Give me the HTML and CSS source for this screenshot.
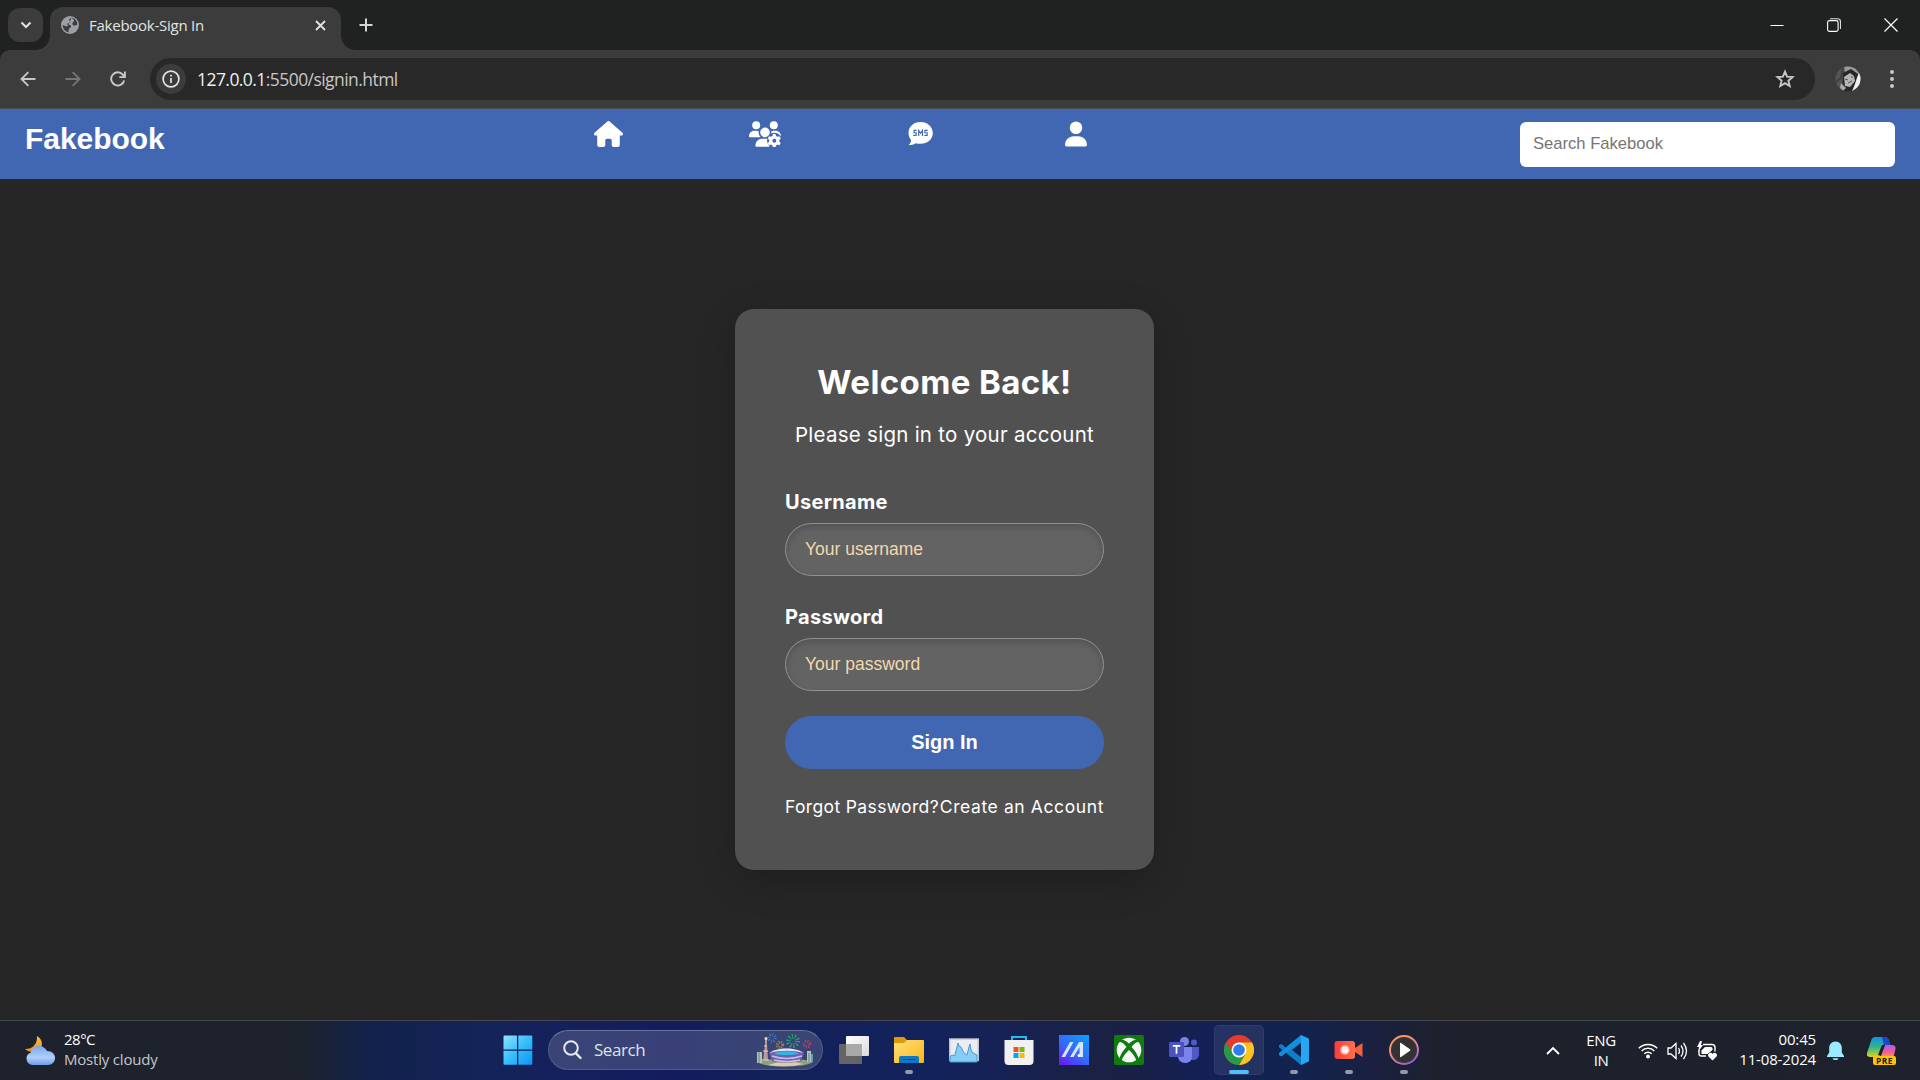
FILE: index.html
```html
<!DOCTYPE html>
<html lang="en">
<head>
<meta charset="utf-8">
<title>Fakebook-Sign In</title>
<link rel="stylesheet" href="styles.css">
</head>
<body>
<div class="desktop">
  <div class="tabstrip">
    <button class="tab-search"><svg width="12" height="8" viewBox="0 0 12 8"><path d="M1.5 1.5 6 6l4.500-4.500" fill="none" stroke="#e3e3e3" stroke-width="2"/></svg></button>
    <div class="tab">
      <svg width="18" height="18" viewBox="0 0 18 18"><circle cx="9" cy="9" r="9" fill="#9aa0a6"/><path d="M10.500 1.600C9 3 7.800 3.200 8.200 4.800c1.500.4 1.300 1.600.2 2.100-1 .5-2.600.3-3 1.700 2.400-.3 4.600.2 4.700 2 0 1.500-2 1.200-2.300 2.700l-.4 2.900C3.800 15.600 1.700 12.400 1.700 9l3.800 1.500L7 9.800M10.500 1.600c4 1 6 4.200 5.800 7.200-1.300-.2-1.700 1-3 .8-1.800-.3-2.200-1.700-1.800-2.700.3-1 1.800-1 1.700-2.300-.2-1-1.400-1.300-2.700-3z" fill="#3c3c3c"/></svg>
      <span class="tab-title">Fakebook-Sign In</span>
      <svg width="11" height="11" viewBox="0 0 11 11"><path d="M1 1l9 9M10 1l-9 9" stroke="#e3e3e3" stroke-width="1.800"/></svg>
    </div>
    <svg class="new-tab" width="14" height="14" viewBox="0 0 14 14"><path d="M7 .5v13M.5 7h13" stroke="#d4d4d4" stroke-width="2"/></svg>
    <div class="window-buttons">
      <svg width="14" height="14" viewBox="0 0 14 14"><path d="M.5 7.500h13" stroke="#fff"/></svg>
      <svg width="14" height="14" viewBox="0 0 14 14"><rect x=".6" y="2.600" width="10.500" height="10.800" rx="1.800" fill="none" stroke="#fff" stroke-width="1.100"/><path d="M3 .7h7.500a3 3 0 0 1 3 3V11" fill="none" stroke="#ddd" stroke-width="1.100"/></svg>
      <svg width="14" height="14" viewBox="0 0 14 14"><path d="M.5.500l13 13m0-13-13 13" stroke="#fff" stroke-width="1.200"/></svg>
    </div>
  </div>
  <div class="toolbar">
    <svg width="16" height="16" viewBox="0 0 16 16"><path d="M15.500 8H2M8.300 1.200 1.500 8l6.800 6.800" fill="none" stroke="#c7c7c7" stroke-width="1.900"/></svg>
    <svg width="16" height="16" viewBox="0 0 16 16"><path d="M.5 8H14M7.700 1.200 14.500 8l-6.800 6.800" fill="none" stroke="#757575" stroke-width="1.900"/></svg>
    <svg width="16" height="16" viewBox="0 0 16 16"><path d="M14.200 9.500a6.600 6.600 0 1 1-1.500-6l2 2.200M14.900.5v5.600H9.300" fill="none" stroke="#c7c7c7" stroke-width="1.900"/></svg>
    <div class="omnibox">
      <span class="site-info"><svg width="18" height="18" viewBox="0 0 18 18"><circle cx="9" cy="9" r="7.900" fill="none" stroke="#e3e3e3" stroke-width="1.700"/><path d="M9 8v5M9 4.800v1.800" stroke="#e3e3e3" stroke-width="1.700"/></svg></span>
      <span class="url"><b>127.0.0.1</b>:5500/signin.html</span>
      <svg width="20" height="20" viewBox="0 0 20 20"><path d="M10 2.600l2.100 5 5.500.5-4.200 3.600 1.300 5.400L10 14.200l-4.700 2.900 1.300-5.400-4.200-3.600 5.500-.5z" fill="none" stroke="#c7c7c7" stroke-width="1.900"/></svg>
    </div>
    <svg class="avatar" width="26" height="26" viewBox="0 0 26 26"><clipPath id="face"><circle cx="13" cy="13" r="12.500"/></clipPath><g clip-path="url(#face)"><path d="M0 0h26v26H0z" fill="#555"/><path d="M9 0h10l7 7v6L18 5l-8 1z" fill="#999"/><path d="M8 7l8-4 7 5-1 12-6 6H7z" fill="#272727"/><path d="M9 11l6-4 4 3 1 5-5 6-5-1z" fill="#b5b5b5"/><path d="M10 13l3 1m3-3 2 0m-5 6 4-2" stroke="#555"/><path d="M25 6c-4 5-3 9-8 19h4l7-9z" fill="#eee"/><path d="M6 17l5 5-3 3-3-3z" fill="#aaa"/><path d="M8 2 6 12 0 17" stroke="#404040" stroke-width="2" fill="none"/></g></svg>
    <svg width="6" height="20" viewBox="0 0 6 20" fill="#c7c7c7"><circle cx="3" cy="3" r="2"/><circle cx="3" cy="10" r="2"/><circle cx="3" cy="17" r="2"/></svg>
  </div>

  <header class="site-header">
    <div class="logo">Fakebook</div>
    <nav class="site-nav">
      <a><svg width="29" height="26" viewBox="0 0 576 512"><path fill="#fff" d="M575.800 255.500c0 18-15 32.100-32 32.100h-32l.7 160.200c0 2.700-.2 5.400-.5 8.100V472c0 22.100-17.900 40-40 40H392c-22.100 0-40-17.900-40-40v-88c0-17.700-14.300-32-32-32h-64c-17.700 0-32 14.300-32 32v88c0 22.100-17.900 40-40 40h-80c-22.100 0-40-17.900-40-40V287.600H32c-18 0-32-14-32-32.100 0-9 3-17 10-24L266.400 8c7-7 15-8 22-8s15 2 21 7l255.400 224.500c8 7 12 15 11 24z"/></svg></a>
      <a><svg width="32" height="26" viewBox="0 0 640 512"><g fill="#fff"><circle cx="144" cy="80" r="80"/><circle cx="496" cy="80" r="80"/><path d="M0 298.700C0 239.800 47.800 192 106.700 192h42.700c15.900 0 31 3.500 44.600 9.700-8.200 54 14 92 42 118.300H21.300C9.600 320 0 310.400 0 298.700zM404 320c50-34 44-88 42-118.300 13.600-6.200 28.700-9.700 44.600-9.700h42.700C592 192 640 240 640 298.700c0 12-10 21.300-21.300 21.300z"/></g><g fill="#fff"><path d="M128 485.300C128 411.700 187.700 352 261.300 352H405v160H154.700C140 512 128 500 128 485.300z"/><circle cx="320" cy="224" r="96"/></g><circle cx="509" cy="382" r="149" fill="#4267b2"/><path d="M480 256h50l10 39 29 17 39-11 27 44-29 29v32l29 29-27 44-39-11-29 17-10 38h-50l-10-38-29-17-38 11-27-44 28-29v-32l-28-29 27-44 38 11 29-17z" fill="#fff"/><circle cx="506" cy="390" r="39" fill="#4267b2"/></svg></a>
      <a><svg width="27" height="25" viewBox="0 0 25 24"><path d="M12.500 1C5.800 1 1 5.500 1 11.500c0 2.600.9 4.900 2.500 6.700-.2 2-.9 3.500-2.400 4.900 3 .2 5.300-.6 6.900-1.800 1.300.4 2.900.6 4.500.6 6.800 0 11.800-4.500 11.800-10.400S19.300 1 12.500 1z" fill="#fff"/><path d="M8.800 9H6.300v2.300h2v2.500H5.600M10.800 14.500V9l1.800 2.800L14.400 9v5.500M19.400 9h-2.700v2.300h2.200v2.500h-2.700" fill="none" stroke="#4267b2" stroke-width="1.100"/></svg></a>
      <a><svg width="22" height="26" viewBox="0 0 448 512"><path fill="#fff" d="M224 256A128 128 0 1 0 224 0a128 128 0 1 0 0 256zm-45.700 48C79.800 304 0 383.800 0 482.300 0 498.700 13.300 512 29.700 512H418.300c16.400 0 29.700-13.300 29.700-29.700C448 383.800 368.200 304 269.700 304H178.300z"/></svg></a>
    </nav>
    <input class="site-search" type="text" placeholder="Search Fakebook">
  </header>

  <main class="page">
    <form class="card">
      <h1>Welcome Back!</h1>
      <p class="lead">Please sign in to your account</p>
      <label>Username</label>
      <input type="text" placeholder="Your username">
      <label>Password</label>
      <input type="text" placeholder="Your password">
      <button type="button">Sign In</button>
      <div class="links"><a>Forgot Password?</a><a>Create an Account</a></div>
    </form>
  </main>

  <footer class="taskbar">
    <div class="weather">
      <svg width="30" height="30" viewBox="0 0 30 30"><defs><linearGradient id="mo" x2="0" y2="1"><stop stop-color="#fcc23c"/><stop offset="1" stop-color="#f08a1c"/></linearGradient><linearGradient id="cl" x2="0" y2="1"><stop stop-color="#7ca6ee"/><stop offset=".6" stop-color="#b0cffb"/><stop offset="1" stop-color="#6d9be9"/></linearGradient></defs><path d="M12 0c5 3 6 8 4 12s-11 6-16 1c4 0 7-1 9.500-4S12 3 12 0z" fill="url(#mo)"/><path d="M7 29a6.500 6.500 0 0 1-1-12.600C6.500 12 10 10 14 10s6.500 2 8 5c5 0 8 3 8 7s-3 7-7 7z" fill="url(#cl)"/></svg>
      <div class="forecast"><div class="temp">28°C</div><div class="sky">Mostly cloudy</div></div>
    </div>

    <div class="apps">
      <div class="app"><svg width="30" height="30" viewBox="0 0 30 30"><defs><linearGradient id="win" x2="1" y2="1"><stop stop-color="#8fe3ff"/><stop offset=".5" stop-color="#36bffa"/><stop offset="1" stop-color="#0c93f5"/></linearGradient></defs><path d="M.500 1.500Q.5.500 1.500.500H14v14H.5zM15.300.500h13q1 0 1 1v13h-14zM.5 15.700H14v14H1.500q-1 0-1-1zM15.300 15.700h14v13q0 1-1 1h-13z" fill="url(#win)"/></svg></div>
      <div class="task-search">
        <svg width="19" height="20" viewBox="0 0 19 20"><circle cx="8" cy="8" r="6.800" fill="none" stroke="#e6e8f0" stroke-width="2"/><path d="M13 13.300l4.500 4.700" stroke="#e6e8f0" stroke-width="2.400" stroke-linecap="round"/></svg>
        <span>Search</span>
        <svg width="58" height="34" viewBox="0 0 58 34">
          <path d="M1 29c8 6 48 6 56 0-5-4-50-4-56 0z" fill="#8ea17f"/>
          <path d="M12 32q17-6 36-1-17 4-36 1z" fill="#e3c9a5"/>
          <path d="M1 19h5v11H1zM51 18h4v11h-4z" fill="#b9c5b2"/><path d="M3 19v11M53 20v9" stroke="#4f8a8c"/><path d="M55 21h2v8h-2z" fill="#5e9ec4"/>
          <path d="M9 5v7L7 27h5l-1-15V5z" fill="#b99a98"/><path d="M7 18h5M8 13h3M6 27h7" stroke="#ead0c5"/><circle cx="10" cy="5.500" r="1.500" fill="#f1d7b5"/>
          <path d="M13 20c4-6 31-6 35 0l-3 8c-8 2-21 2-29 0z" fill="#6d61a8"/><path d="M14 20c6-6 27-6 33 0-8-3-25-3-33 0z" fill="#e3e2f8"/><path d="M18 20.500c6-3 19-3 25 0-6 2-19 2-25 0z" fill="#33b5e5"/><path d="M16 23q14 5 30 0M18 27q13 3 26 0" fill="none" stroke="#c8bdf1" stroke-width="1.500"/>
          <g fill="none"><circle cx="16" cy="5" r="3.200" stroke="#3686c8" stroke-width="3" stroke-dasharray=".9 1.600"/><circle cx="37" cy="8" r="4.500" stroke="#27a875" stroke-width="5" stroke-dasharray="1 1.800"/><circle cx="24" cy="12" r="2.700" stroke="#ae8049" stroke-width="3" stroke-dasharray="1 1.200"/><circle cx="51" cy="11" r="2.900" stroke="#bd456f" stroke-width="3" stroke-dasharray=".9 1.400"/></g>
        </svg>
      </div>
      <div class="app"><svg width="30" height="30" viewBox="0 0 30 30"><defs><linearGradient id="tv" x2="1" y2="1"><stop stop-color="#fff"/><stop offset="1" stop-color="#dcdcdc"/></linearGradient></defs><rect x="0" y="9" width="23" height="20" rx="1" fill="#646464"/><rect x="7" y="1" width="23" height="20" rx="1" fill="url(#tv)"/><path d="M7 9h16v12H8q-1 0-1-1z" fill="#a9a9a9"/></svg></div>
      <div class="app open"><svg width="30" height="30" viewBox="0 0 30 30"><defs><linearGradient id="fo" x2="1" y2="1"><stop stop-color="#ffe07d"/><stop offset="1" stop-color="#fbb714"/></linearGradient></defs><path d="M0 3q0-1 1-1h9l3 3v6H0z" fill="#dd9a05"/><path d="M0 8h10l3-3h16q1 0 1 1v21q0 1-1 1H1q-1 0-1-1z" fill="url(#fo)"/><path d="M5 28v-5q0-2 2-2h16q2 0 2 2v5z" fill="#0e77c6"/><path d="M9 24.500h12" stroke="#064c86"/></svg></div>
      <div class="app"><svg width="30" height="30" viewBox="0 0 30 30"><rect x=".7" y="4" width="28.600" height="21.500" fill="#ececf0" stroke="#bfc3cc" stroke-width="1.400"/><path d="M1.500 21l2-1 2 1L7 16l2-8 1 3 2 1 3 6 3 2 2-8 1-3 1 6 2 3 4 2v7h-27z" fill="#88cdf6" stroke="#3f9cd3"/></svg></div>
      <div class="app"><svg width="30" height="30" viewBox="0 0 30 30"><path d="M8 7V2h14v5" fill="none" stroke="#1ebbf4" stroke-width="2"/><path d="M.5 5h29v21q0 4-4 4h-21q-4 0-4-4z" fill="#f1f1f2"/><path d="M9.500 12h5v5h-5z" fill="#f04e25"/><path d="M15.500 12h5v5h-5z" fill="#7ab902"/><path d="M9.500 18h5v5h-5z" fill="#08a5ec"/><path d="M15.500 18h5v5h-5z" fill="#fdb901"/></svg></div>
      <div class="app"><svg width="30" height="30" viewBox="0 0 30 30"><defs><linearGradient id="ma" x1=".9" x2=".1" y2="1"><stop stop-color="#0b9dff"/><stop offset=".55" stop-color="#3568fa"/><stop offset="1" stop-color="#671bf3"/></linearGradient></defs><path d="M0 0h30v30H0z" fill="url(#ma)"/><path d="M2.500 22 11 7h3.500L6 22zM11 22 20 7h4v15h-3.500V12L14.500 22z" fill="#d7e4ff"/><circle cx="20" cy="20.500" r="1.500" fill="#fff"/></svg></div>
      <div class="app"><svg width="30" height="30" viewBox="0 0 30 30"><rect width="30" height="30" rx="2" fill="#107c10"/><circle cx="15" cy="15" r="12.300" fill="#f7f7f7"/><path d="M6 5c3-1 6 1 9 3.500C18 6 21 4 24 5l2 2c-3-1-6 2-8.500 5 4 4 7 9 7 13l-2 1c-1-4-4-8-7.500-11-3.500 3-6.500 7-7.500 11l-2-1c0-4 3-9 7-13C10 9 7 6 4 7z" fill="#107c10"/></svg></div>
      <div class="app"><svg width="30" height="30" viewBox="0 0 30 30"><circle cx="25" cy="7.500" r="3" fill="#5059c9"/><path d="M20 12h10v7c0 4-3 6-6 6h-4z" fill="#5059c9"/><circle cx="15.500" cy="6.500" r="4.500" fill="#7b83eb"/><path d="M9 12h14v9c0 5-3 7-7 7s-7-3-7-7z" fill="#7b83eb"/><rect y="7" width="15" height="15" rx="1" fill="#4b53bc"/><path d="M3.800 10.800h7.500M7.500 10.800v8" stroke="#fff" stroke-width="1.700"/></svg></div>
      <div class="app active"><svg width="30" height="30" viewBox="0 0 30 30"><circle cx="15" cy="15" r="15" fill="#e33b2e"/><path d="M2 7.500 8.900 18.500l6.100 3.500V30A15 15 0 0 1 2 7.500z" fill="#259b48"/><path d="M28 7.500H15l6.500 11.300L15 30A15 15 0 0 0 28 7.500z" fill="#fcc31e"/><path d="M8.900 18.500 15 30l6.500-11.300z" fill="#259b48"/><circle cx="15" cy="15" r="7.500" fill="#fff"/><circle cx="15" cy="15" r="5.800" fill="#2f7de9"/></svg></div>
      <div class="app open"><svg width="30" height="30" viewBox="0 0 30 30"><path d="M22 0 8 13.500 2.500 9 0 10.200v2L22 30z" fill="#0b7fcb"/><path d="M22 0 0 18v2l2.500 1.500L8 17 22 7z" fill="#1390dc"/><path d="M22 0l7.300 3.300q.7.400.7 1.200v21q0 .8-.7 1.200L22 30z" fill="#27a6f2"/><path d="M22 8v14l-9-7z" fill="#12214f"/></svg></div>
      <div class="app open"><svg width="30" height="30" viewBox="0 0 30 30"><defs><linearGradient id="cam" x2="1"><stop stop-color="#fb3a3c"/><stop offset="1" stop-color="#fb7248"/></linearGradient></defs><path d="M21 13l7.500-5v14L21 17z" fill="#f2603f"/><rect x=".5" y="6" width="20.500" height="18" rx="3" fill="url(#cam)"/><circle cx="11" cy="15" r="5" fill="#fd9b8b"/><circle cx="11" cy="15" r="3.500" fill="#fff2ee"/></svg></div>
      <div class="app open"><svg width="30" height="30" viewBox="0 0 30 30"><defs><linearGradient id="mp" x2=".6" y2="1"><stop stop-color="#ffa04a"/><stop offset=".55" stop-color="#e88a8f"/><stop offset="1" stop-color="#9c62d4"/></linearGradient></defs><circle cx="15" cy="15" r="14" fill="#333" stroke="url(#mp)" stroke-width="2"/><path d="M11 8.500v13q0 1 1 .5l9-6.300q.7-.7 0-1.400L12 8q-1-.5-1 .5z" fill="#fff"/></svg></div>
    </div>

    <div class="tray">
      <svg width="14" height="9" viewBox="0 0 14 9"><path d="M1 8l6-6 6 6" fill="none" stroke="#fff" stroke-width="1.900"/></svg>
      <div class="lang">ENG<br>IN</div>
      <div class="status">
        <svg width="20" height="17" viewBox="0 0 20 17"><g fill="none" stroke="#fff" stroke-width="1.500"><path d="M.8 6.200a13 13 0 0 1 18.400 0M3.600 9a9.100 9.100 0 0 1 12.800 0M6.300 11.700a5.200 5.200 0 0 1 7.400 0"/></g><circle cx="10" cy="14.500" r="2" fill="#fff"/></svg>
        <svg width="21" height="18" viewBox="0 0 21 18"><path d="M1 6h3l5-4.500v15L4 12H1zM11.500 6q2 3 0 6M14 3.500q4 5.500 0 11M16.500 1q6 8 0 16" fill="none" stroke="#fff" stroke-width="1.300"/></svg>
        <svg width="21" height="20" viewBox="0 0 21 20"><path d="M6 3.500h9q3 0 3 3v4M9 15H4.500Q2 15 2 12.500V9" fill="none" stroke="#fff" stroke-width="1.400"/><path d="M8 6h6q1.500 0 1.500 1.500V9l-5 4H4.500V9.500z" fill="#fff"/><path d="M3 0 0 6h2l-1 5 5-7H4l1-4z" fill="#fff"/><path d="M15.500 19.500l-4-4c-2-3 2.500-5.500 4-2.500 1.500-3 6-.5 4 2.500z" fill="#fff"/></svg>
      </div>
      <div class="clock">00:45<br>11-08-2024</div>
      <svg width="17" height="20" viewBox="0 0 17 20"><path d="M8.500.500c4 0 6.300 3 6.300 6.500v4.500L17 15v1H0v-1l2.200-3.500V7C2.200 3.500 4.500.5 8.500.5zM5.500 17.200h6c-.5 2.500-5.500 2.500-6 0z" fill="#99ebff"/></svg>
      <div class="copilot">
        <svg width="29" height="20" viewBox="0 0 29 20"><defs><linearGradient id="ca" x2="0" y2="1"><stop stop-color="#148fe6"/><stop offset=".5" stop-color="#30b68b"/><stop offset="1" stop-color="#e1d41c"/></linearGradient><linearGradient id="cb" x2="0" y2="1"><stop stop-color="#a75df3"/><stop offset=".6" stop-color="#ef5f95"/><stop offset="1" stop-color="#f99a55"/></linearGradient></defs><path d="M8 0h10q3 0 4 4l1 4h-4q-2 0-3 3l-2 7q-1 2-4 2H3q-4 0-3-4L4 4q1-4 4-4z" fill="url(#ca)"/><path d="M15 0h3q3 0 4 4l1 4h-4q-2 0-2 1z" fill="#2144c8"/><path d="M18 8h7q4 0 3.500 4l-2 8H13z" fill="url(#cb)"/><path d="M11 18l4-10h3l-4 11z" fill="#1c212b"/></svg>
        <span>PRE</span>
      </div>
    </div>
  </footer>
</div>
</body>
</html>
```
FILE: styles.css
```css
* { box-sizing: border-box; }
body { margin: 0; background: #262626; }
svg { display: block; flex: none; }
button, input { margin: 0; border: 0; font-family: "Liberation Sans", Arial, sans-serif; }
.desktop { width: 1920px; height: 1080px; display: flex; flex-direction: column; overflow: hidden; font-family: "Open Sans", "Noto Sans", sans-serif; }

.tabstrip { height: 50px; background: #202221; display: flex; align-items: center; padding-left: 8px; }
.tab-search { width: 35px; height: 34px; border-radius: 12px; background: #3c3c3c; display: grid; place-items: center; padding: 0; }
.tab { position: relative; align-self: flex-end; width: 291px; height: 43px; margin-left: 7px; padding: 0 15px 7px 11px; background: #3c3c3c; border-radius: 13px 13px 0 0; display: flex; align-items: center; }
.tab::before, .tab::after { content: ""; position: absolute; bottom: 0; width: 14px; height: 14px; }
.tab::before { left: -14px; background: radial-gradient(circle at 0 0, transparent 13.5px, #3c3c3c 14px); }
.tab::after { right: -14px; background: radial-gradient(circle at 100% 0, transparent 13.5px, #3c3c3c 14px); }
.tab-title { flex: 1; margin-left: 10px; font-size: 15px; line-height: 20px; letter-spacing: -.25px; color: #e3e3e3; }
.new-tab { margin-left: 18px; }
.window-buttons { margin-left: auto; margin-right: 22px; display: flex; gap: 43px; }

.toolbar { height: 59px; padding: 0 25px 1px 20px; border-bottom: 1px solid #4a4a4a; background: #3c3c3c; border-radius: 10px 10px 0 0; display: flex; align-items: center; position: relative; isolation: isolate; }
.desktop { background: linear-gradient(#202221 62px, #262626 62px); }
.toolbar > svg + svg { margin-left: 29px; }
.omnibox { flex: 1; height: 42px; margin-left: 24px; padding: 0 20px 0 6px; border-radius: 21px; background: #282828; display: flex; align-items: center; }
.site-info { width: 30px; height: 30px; border-radius: 50%; background: #3c3c3c; display: grid; place-items: center; }
.url { flex: 1; margin-left: 11px; font-size: 17.5px; line-height: 24px; letter-spacing: -.56px; color: #c7c7c7; }
.url b { font-weight: 400; color: #f0f0f0; }
.toolbar > .avatar { margin-left: 20px; }
.toolbar > .avatar + svg { margin-left: 28px; }

.site-header { height: 70px; padding: 12px 25px; background: #4267b2; display: flex; align-items: flex-start; }
.logo { width: 472px; padding-top: 1px; font: 700 30px/34px "Liberation Sans", Arial, sans-serif; letter-spacing: -.05px; color: #fff; }
.site-nav { width: 680px; margin-left: 34px; display: flex; }
.site-nav a { width: 155.7px; display: flex; justify-content: center; }
.site-search { width: 375px; height: 45px; margin: 1px 0 0 auto; padding: 0 13px 1px; border-radius: 6px; background: #fff; font-size: 16.6px; }
.site-search::placeholder { color: #757575; opacity: 1; }

.page { flex: 1; padding: 130px 31px 0 0; display: flex; justify-content: center; align-items: flex-start; }
.card { width: 419px; height: 561px; padding: 50px; border-radius: 19px; background: #515151; box-shadow: 0 10px 38px rgba(0,0,0,.2); display: flex; flex-direction: column; font-family: Inter, sans-serif; color: #fff; }
.card h1 { margin: 0 0 15px; text-align: center; font-size: 33px; line-height: 46px; font-weight: 700; letter-spacing: .4px; }
.lead { margin: 0 -5px 36px; text-align: center; font-size: 20.5px; line-height: 30px; letter-spacing: .27px; }
.card label { margin-bottom: 5px; font-size: 20px; line-height: 32px; font-weight: 700; letter-spacing: .3px; }
.card input { height: 53px; margin-bottom: 25px; padding: 0 19px; border: 1px solid #919191; border-radius: 27px; background: #636363; box-shadow: inset 0 3px 6px rgba(0,0,0,.17); font-size: 17.5px; }
.card input::placeholder { color: #f0d9ad; opacity: 1; }
.card button { height: 53px; padding: 0 0 1px; border-radius: 27px; background: #4267b2; color: #fff; font-size: 20px; font-weight: 700; }
.links { margin-top: 26px; display: flex; justify-content: space-between; font-size: 17.5px; line-height: 24px; letter-spacing: .36px; white-space: nowrap; }
.links a + a { letter-spacing: .6px; margin-left: -1px; }

.taskbar { height: 60px; border-top: 1px solid #454750; background: linear-gradient(90deg, #1d222c 0, #1d222c 300px, #12224c 370px, #14235a 500px, #141c5e 670px, #12215a 760px, #13225a 950px, #1b2143 1110px, #142056 1210px, #11234f 1290px, #1a2040 1370px, #1e212d 1440px, #1d222c 100%); display: grid; grid-template-columns: 490px auto 1fr; align-items: center; font-size: 15px; line-height: 20px; color: #fff; }
.weather { padding-left: 25px; display: flex; align-items: center; gap: 9px; letter-spacing: -.2px; }
.forecast { padding-bottom: 4px; }
.temp { letter-spacing: -.5px; }
.sky { color: #c5c7ca; }
.apps { display: flex; align-items: center; padding-bottom: 1px; }
.app { position: relative; width: 55px; height: 50px; display: grid; place-items: center; }
.app.open::after { content: ""; position: absolute; left: 24px; bottom: 1px; width: 8px; height: 4px; border-radius: 2px; background: #9498a8; }
.app.active { width: 50px; margin: 0 2.5px; border-radius: 5px; background: rgba(255,255,255,.08); box-shadow: inset 0 0 0 1px rgba(255,255,255,.05); }
.app.active::after { content: ""; position: absolute; left: 15px; bottom: 1px; width: 20px; height: 4px; border-radius: 2px; background: #4cc2ff; }
.task-search { width: 275px; height: 40px; margin: 0 3px; padding: 0 8px 0 14px; border: 1px solid rgba(255,255,255,.13); border-top-color: rgba(255,255,255,.27); border-radius: 20px; background: rgba(255,255,255,.16); display: flex; align-items: center; font-size: 17px; color: #dfe2ec; }
.task-search span { flex: 1; margin-left: 12px; letter-spacing: -.45px; }
.tray { padding-left: 115px; display: flex; align-items: center; }
.lang { width: 40px; margin-left: 21px; padding-bottom: 2px; text-align: center; letter-spacing: -.4px; }
.status { margin-left: 17px; display: flex; align-items: center; gap: 9px; }
.clock { width: 90px; margin-left: 8px; padding-bottom: 4px; text-align: right; letter-spacing: -.15px; }
.clock + svg { margin-left: 11px; }
.copilot { position: relative; width: 29px; height: 28px; margin-left: 23px; }
.copilot span { position: absolute; left: 6px; bottom: 0; width: 23px; height: 9px; border-radius: 2px; background: #fdc50a; color: #252010; font-size: 8.5px; font-weight: 700; line-height: 9px; text-align: center; letter-spacing: .5px; }
```
